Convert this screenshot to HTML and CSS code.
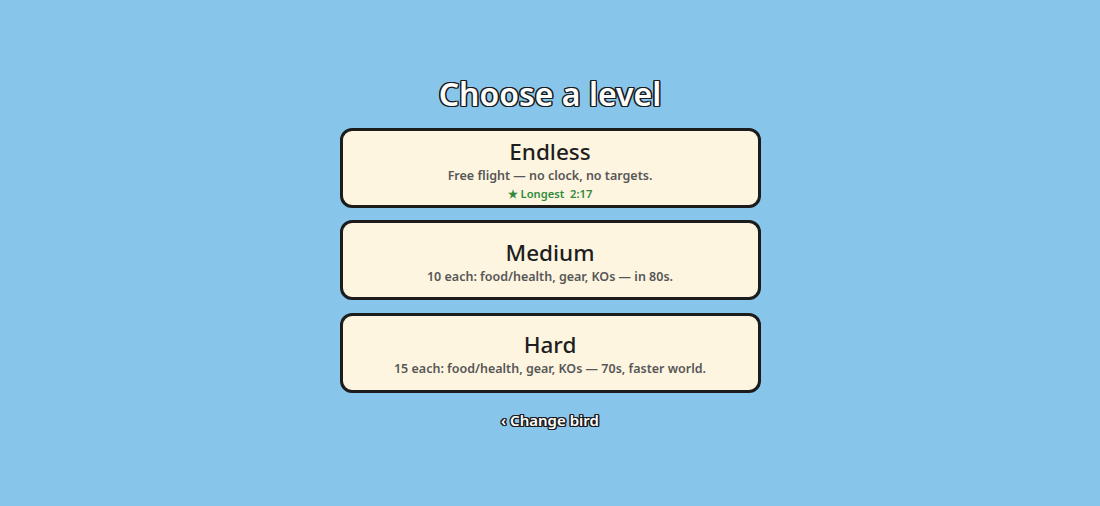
FILE: index.html
```html
<html lang="en">

<head>
    <meta charset="UTF-8" />
    <meta name="viewport" content="width=device-width, initial-scale=1.0" />
    <title>Choose a level</title>
    <link rel="stylesheet" href="styles.css">
</head>

<body>
    <div class="screen">
        <h1 class="outlined title">Choose a level</h1>
        <div class="level_list">
            <a href="#" class="level_card">
                <h2>Endless</h2>
                <p class="level_desc">Free flight — no clock, no targets.</p>
                <p class="level_best">★ Longest&nbsp; 2:17</p>
            </a>
            <a href="#" class="level_card">
                <h2>Medium</h2>
                <p class="level_desc">10 each: food/health, gear, KOs — in 80s.</p>
            </a>
            <a href="#" class="level_card">
                <h2>Hard</h2>
                <p class="level_desc">15 each: food/health, gear, KOs — 70s, faster world.</p>
            </a>
        </div>
        <a href="#" class="outlined back_link">‹ Change bird</a>
    </div>
</body>

</html>
```

FILE: styles.css
```css
html,
body {
    margin: 0;
    height: 100%;
}

body {
    background: #87c6ea;
    font-family: "Noto Sans", "Open Sans", sans-serif;
}

.screen {
    box-sizing: border-box;
    height: 100%;
    padding-bottom: 2px;
    display: flex;
    flex-direction: column;
    align-items: center;
    justify-content: center;
}

/* white letters with a dark rim */
.outlined {
    color: #fff;
    text-shadow:
        -1.2px -1.2px 0 #1b1b1b, 1.2px -1.2px 0 #1b1b1b,
        -1.2px 1.2px 0 #1b1b1b, 1.2px 1.2px 0 #1b1b1b,
        0 -1.4px 0 #1b1b1b, 0 1.4px 0 #1b1b1b,
        -1.4px 0 0 #1b1b1b, 1.4px 0 0 #1b1b1b;
}

.title {
    margin: 0 0 14px;
    font-size: 32px;
    font-weight: 600;
    line-height: 40px;
}

.level_list {
    display: flex;
    flex-direction: column;
    gap: 12.5px;
}

.level_card {
    box-sizing: border-box;
    width: 421px;
    height: 80px;
    background: #fdf5e0;
    border: 3px solid #1c1c1c;
    border-radius: 12px;
    display: flex;
    flex-direction: column;
    align-items: center;
    justify-content: center;
    text-decoration: none;
}

.level_card h2 {
    margin: 3px 0 0;
    font-size: 22.5px;
    font-weight: 500;
    line-height: 30px;
    color: #1e1e1e;
}

.level_desc {
    margin: 0;
    font-size: 12.5px;
    font-weight: 600;
    line-height: 18px;
    color: #575757;
}

.level_best {
    margin: 0;
    font-size: 11.2px;
    font-weight: 600;
    line-height: 17px;
    color: #2f8a3b;
}

.back_link {
    margin-top: 16px;
    font-size: 15px;
    font-weight: 600;
    line-height: 22px;
    text-decoration: none;
}
```
